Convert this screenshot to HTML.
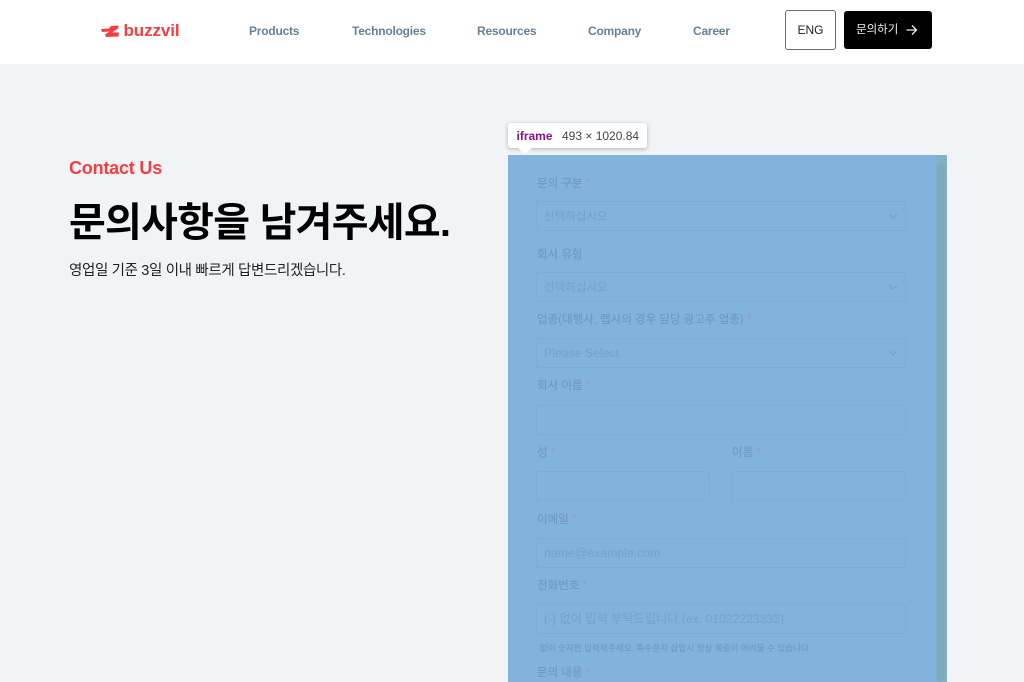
<!DOCTYPE html>
<html lang="ko">
<head>
<meta charset="utf-8">
<title>Contact Us</title>
<style>
html,body{margin:0;padding:0;width:1024px;height:682px;overflow:hidden;background:#f0f4f7;font-family:"Liberation Sans","Noto Sans CJK KR",sans-serif;}
*{box-sizing:border-box}
#wrap{position:absolute;left:0;top:0;width:1024px;height:682px;filter:blur(.35px)}
.a{position:absolute;white-space:nowrap}
#hdr{position:absolute;left:0;top:0;width:1024px;height:64px;background:#fff}
.nav{font-size:12px;font-weight:700;color:#6a8094;top:23px;line-height:16px;letter-spacing:-.22px}
#ov{position:absolute;left:508px;top:155px;width:439px;height:527px;background:#82b2de;overflow:hidden}
#sb{position:absolute;left:428px;top:0;width:11px;height:527px;background:#84b0c4}
#sb2{position:absolute;left:429px;top:8px;width:8px;height:519px;background:#7eaabf;border-radius:4px}
.l{position:absolute;left:29px;font-size:11.5px;line-height:16px;color:#6f9bc6;white-space:nowrap;font-weight:500}
.l i{font-style:normal;color:#a695c4}
.f{position:absolute;left:28px;width:370px;height:30px;border:1px solid #7cacda;border-radius:3px;font-size:11.5px;line-height:28px;padding-left:7px;color:#74a2cf;white-space:nowrap}
.k{line-height:30px}
.e{font-size:12.3px}
.f svg{position:absolute;right:6px;top:10px}
</style>
</head>
<body>
<div id="wrap">
<div id="hdr"></div>
<svg class="a" style="left:101px;top:25px" width="18" height="13" viewBox="0 0 18 13"><path d="M0 4 L8 3.5 L10 1 L17.5 .5 L17 3.5 L11 7.5 L18 7.5 L17.5 11.5 L5 12 L4 9.5 L8.5 6.5 L1 7 Z" fill="#f63d3f"/></svg>
<div class="a" style="left:123.5px;top:21px;font-size:17px;font-weight:700;line-height:20px;color:#f63d3f;letter-spacing:-.1px">buzzvil</div>
<div class="a nav" style="left:249px">Products</div>
<div class="a nav" style="left:352px">Technologies</div>
<div class="a nav" style="left:477px">Resources</div>
<div class="a nav" style="left:588px">Company</div>
<div class="a nav" style="left:693px">Career</div>
<div class="a" style="left:785px;top:10px;width:51px;height:40px;border:1px solid #6d6d6d;border-radius:3px;background:#fff;font-size:12px;line-height:38px;text-align:center;color:#222">ENG</div>
<div class="a" style="left:844px;top:10.5px;width:88px;height:38px;background:#000;border-radius:3px;color:#eee;font-size:11.5px;line-height:38px;padding-left:12px">문의하기<svg style="position:absolute;left:61px;top:13px" width="13" height="12" viewBox="0 0 13 12"><path d="M1.5 6H11.5M7 1.5L11.5 6L7 10.5" fill="none" stroke="#eee" stroke-width="1.3"/></svg></div>

<div class="a" style="left:69px;top:157px;font-size:18px;font-weight:700;line-height:22px;color:#f63d3f;letter-spacing:-.2px">Contact Us</div>
<div class="a" style="left:69px;top:196px;font-size:40px;font-weight:700;line-height:54px;color:#000;letter-spacing:-.75px">문의사항을 남겨주세요.</div>
<div class="a" style="left:69px;top:261px;font-size:14.5px;line-height:20px;color:#222;letter-spacing:-.35px">영업일 기준 3일 이내 빠르게 답변드리겠습니다.</div>

<div id="ov">
  <div id="sb"></div><div id="sb2"></div>
  <div class="l" style="top:21px">문의 구분 <i>*</i></div>
  <div class="f k" style="top:46px">선택하십시오<svg width="12" height="8" viewBox="0 0 12 8"><path d="M2 2L6 6L10 2" fill="none" stroke="#74a2cf" stroke-width="1.2"/></svg></div>
  <div class="l" style="top:92px">회사 유형</div>
  <div class="f k" style="top:117px">선택하십시오<svg width="12" height="8" viewBox="0 0 12 8"><path d="M2 2L6 6L10 2" fill="none" stroke="#74a2cf" stroke-width="1.2"/></svg></div>
  <div class="l" style="top:157px">업종(대행사, 렙사의 경우 담당 광고주 업종) <i>*</i></div>
  <div class="f e" style="top:183px">Please Select<svg width="12" height="8" viewBox="0 0 12 8"><path d="M2 2L6 6L10 2" fill="none" stroke="#74a2cf" stroke-width="1.2"/></svg></div>
  <div class="l" style="top:223px">회사 이름 <i>*</i></div>
  <div class="f" style="top:250px"></div>
  <div class="l" style="top:290px">성 <i>*</i></div>
  <div class="l" style="top:290px;left:224px">이름 <i>*</i></div>
  <div class="f" style="top:316px;width:174px"></div>
  <div class="f" style="top:316px;left:223px;width:175px"></div>
  <div class="l" style="top:357px">이메일 <i>*</i></div>
  <div class="f e" style="top:383px">name@example.com</div>
  <div class="l" style="top:423px">전화번호 <i>*</i></div>
  <div class="f e" style="top:449px;letter-spacing:-.07px">(-) 없이 입력 부탁드립니다.(ex. 01022223333)</div>
  <div class="l" style="top:485px;font-size:8.6px">-없이 숫자만 입력해주세요. 특수문자 삽입시 정상 제출이 어려울 수 있습니다.</div>
  <div class="l" style="top:510px">문의 내용 <i>*</i></div>
</div>

<div class="a" style="left:508px;top:123px;width:139px;height:25px;background:#fff;border-radius:3px;box-shadow:0 1px 4px rgba(0,0,0,.28);font-size:12px;line-height:26px;color:#444;padding-left:8.5px"><span style="color:#881391;font-weight:700">iframe</span><span style="position:absolute;left:54px">493 × 1020.84</span></div>
<div class="a" style="left:517px;top:147px;width:0;height:0;border-left:8px solid transparent;border-right:8px solid transparent;border-top:7px solid #fff"></div>
</div>
</body>
</html>
